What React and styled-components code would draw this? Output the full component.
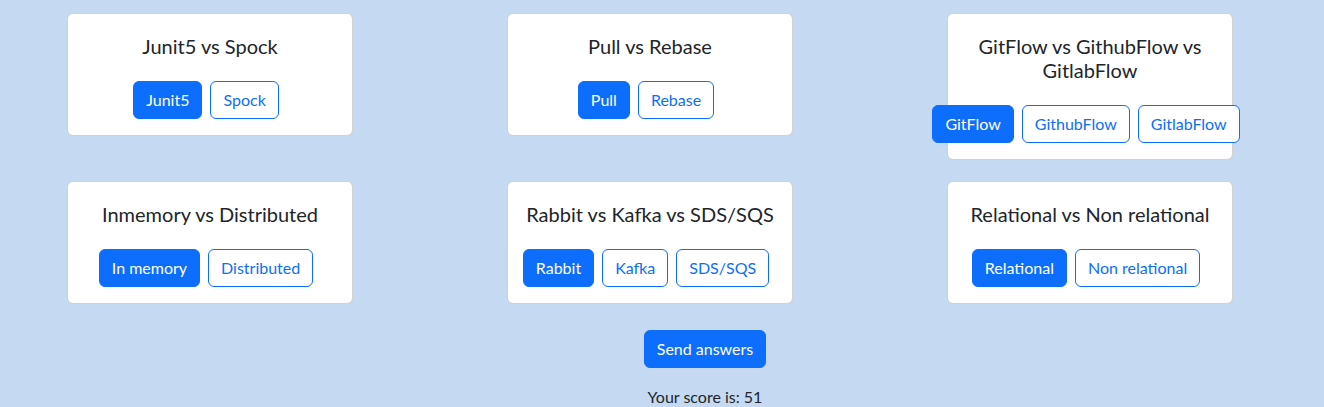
import React from 'react'
import styled, { createGlobalStyle } from 'styled-components'

const GlobalStyle = createGlobalStyle`
    body {
        margin: 0;
        background: #c5daf2;
        font-family: Lato, "Liberation Sans", sans-serif;
        color: #212529;
    }
`

const Page = styled.div`
    padding-top: 13px;
`

const Grid = styled.div`
    display: grid;
    grid-template-columns: repeat(3, 440px);
    justify-content: center;
    justify-items: center;
    align-items: start;
    row-gap: 21px;
    padding-right: 24px;
`

const Card = styled.div`
    width: 286px;
    box-sizing: border-box;
    background: #fff;
    border: 1px solid rgba(0, 0, 0, 0.175);
    border-radius: 6px;
    padding: 20px 16px 16px;
    text-align: center;
`

const Title = styled.h5`
    margin: 0 0 23px;
    font-size: 20px;
    font-weight: 400;
    line-height: 24px;
`

const Choices = styled.div`
    display: flex;
    justify-content: center;
    margin: 0 -40px;
`

const Button = styled.button`
    font-family: inherit;
    font-size: 16px;
    line-height: 24px;
    padding: 6px 12px;
    border-radius: 6px;
    border: 1px solid #0d6efd;
    margin-right: 8px;
    background: ${p => (p.$active ? '#0d6efd' : '#fff')};
    color: ${p => (p.$active ? '#fff' : '#0d6efd')};
    white-space: nowrap;
    cursor: pointer;
`

const Footer = styled.div`
    display: flex;
    flex-direction: column;
    align-items: center;
    margin-top: 26px;
    padding-left: 86px;
`

const SendButton = styled(Button)`
    margin: 0;
`

const Score = styled.div`
    margin-top: 17px;
    font-size: 16px;
    line-height: 24px;
`

const questions = [
    { title: 'Junit5 vs Spock', options: ['Junit5', 'Spock'] },
    { title: 'Pull vs Rebase', options: ['Pull', 'Rebase'] },
    { title: 'GitFlow vs GithubFlow vs GitlabFlow', options: ['GitFlow', 'GithubFlow', 'GitlabFlow'] },
    { title: 'Inmemory vs Distributed', options: ['In memory', 'Distributed'] },
    { title: 'Rabbit vs Kafka vs SDS/SQS', options: ['Rabbit', 'Kafka', 'SDS/SQS'] },
    { title: 'Relational vs Non relational', options: ['Relational', 'Non relational'] },
]

export default function App() {
    return (
        <Page>
            <GlobalStyle />
            <Grid>
                {questions.map(q => (
                    <Card key={q.title}>
                        <Title>{q.title}</Title>
                        <Choices>
                            {q.options.map((o, i) => (
                                <Button key={o} $active={i === 0}>
                                    {o}
                                </Button>
                            ))}
                        </Choices>
                    </Card>
                ))}
            </Grid>
            <Footer>
                <SendButton $active>Send answers</SendButton>
                <Score>Your score is: 51</Score>
            </Footer>
        </Page>
    )
}
